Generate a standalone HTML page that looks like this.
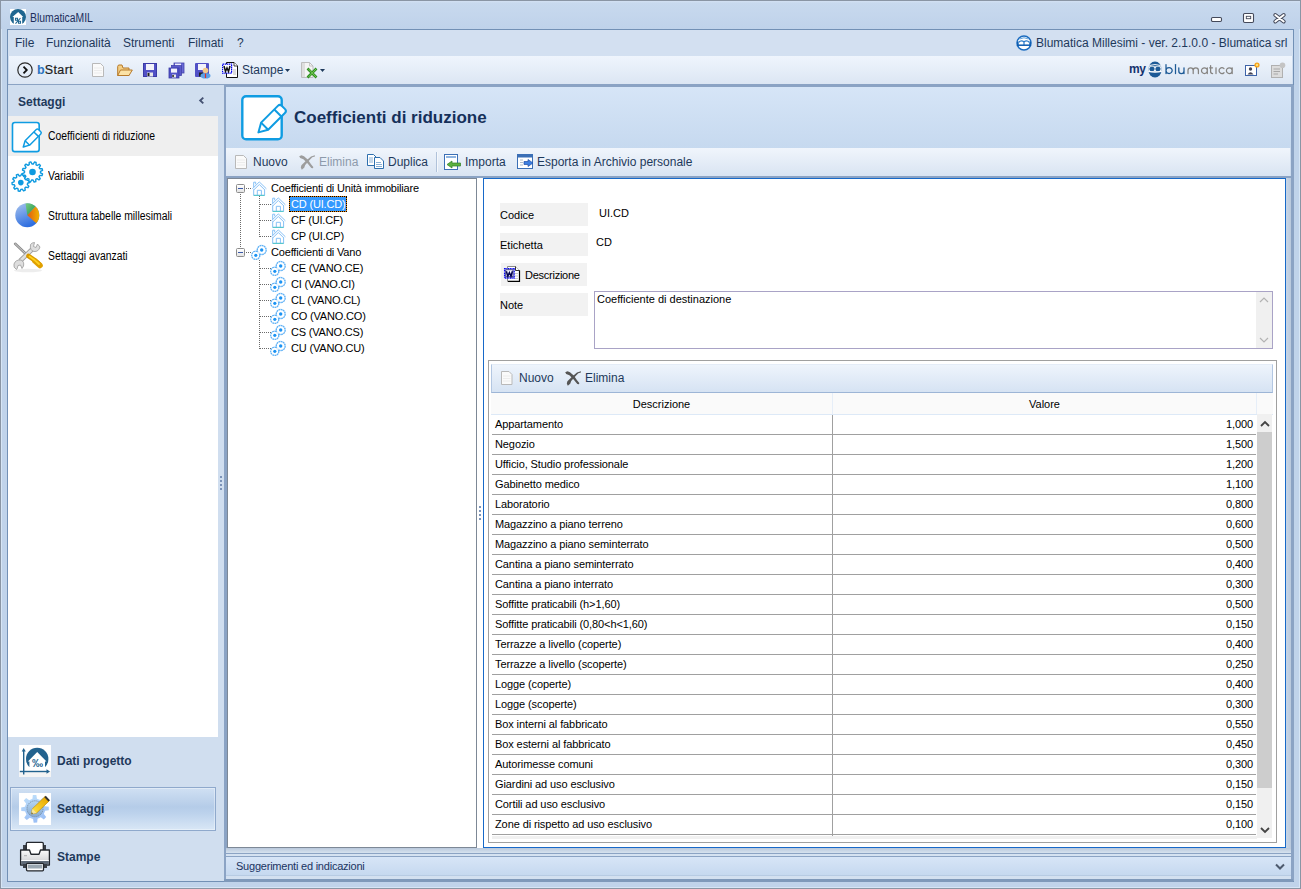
<!DOCTYPE html>
<html><head><meta charset="utf-8">
<style>
*{margin:0;padding:0;box-sizing:border-box}
html,body{width:1301px;height:889px;overflow:hidden}
body{position:relative;background:#c0d3ea;font-family:"Liberation Sans",sans-serif;color:#000;font-size:11px}
.a{position:absolute}
svg{overflow:visible}
.li{font-size:12px;transform:scaleX(0.865);transform-origin:0 0}
.t{position:absolute;white-space:pre;line-height:1}
.rw{font-size:11px;letter-spacing:-0.1px}
.tr{font-size:11px;letter-spacing:-0.18px}
</style></head><body>
<!-- outer window border -->
<div class="a" style="left:0;top:0;width:1301px;height:889px;border:1px solid #8a95a4"></div>
<div class="a" style="left:1px;top:1px;width:1299px;height:887px;border:1px solid #d6e5f5;border-top-color:#dbe7f5"></div>
<!-- title bar -->
<div class="a" style="left:1px;top:1px;width:1299px;height:28px;background:linear-gradient(#d3e1f3 0,#c8d9ee 8%,#bfd2ea)"></div>
<div class="t li" style="left:30px;top:12px;color:#1e2f5c">BlumaticaMIL</div>

<!-- inner frame -->
<div class="a" style="left:7px;top:29px;width:1287px;height:853px;border:1px solid #7290b5;background:#cddcef"></div>
<!-- menu bar -->
<div class="a" style="left:8px;top:30px;width:1285px;height:26px;background:#d3e0f1"></div>
<div class="t" style="left:15px;top:37px;font-size:12px;color:#1e395b">File</div>
<div class="t" style="left:46px;top:37px;font-size:12px;color:#1e395b">Funzionalità</div>
<div class="t" style="left:123px;top:37px;font-size:12px;color:#1e395b">Strumenti</div>
<div class="t" style="left:188px;top:37px;font-size:12px;color:#1e395b">Filmati</div>
<div class="t" style="left:237px;top:37px;font-size:12px;color:#1e395b">?</div>
<div class="t" style="left:1036px;top:37px;font-size:12px;color:#1e395b">Blumatica Millesimi - ver. 2.1.0.0 - Blumatica srl</div>
<!-- toolbar -->
<div class="a" style="left:9px;top:56px;width:1283px;height:28px;background:linear-gradient(#eff5fd,#dce6f3)"></div>
<div class="t" style="left:37px;top:64px;font-size:12.5px;font-weight:bold;color:#2b74c0">b<span style="color:#1c1c1c;font-weight:normal;-webkit-text-stroke:0.2px #1c1c1c;letter-spacing:0.45px">Start</span></div>
<div class="t" style="left:242px;top:64px;font-size:12px;color:#1e395b">Stampe</div>

<!-- line under toolbar -->
<div class="a" style="left:8px;top:84px;width:1285px;height:1px;background:#8ba3c4"></div>

<!-- left panel -->
<div class="a" style="left:8px;top:85px;width:216px;height:796px;background:#d0deef"></div>
<div class="t" style="left:18px;top:96px;font-size:12px;font-weight:bold;color:#1e395b">Settaggi</div>
<div class="a" style="left:8px;top:116px;width:210px;height:621px;background:#fff"></div>
<div class="a" style="left:8px;top:116px;width:210px;height:40px;background:#efefef"></div>
<div class="t li" style="left:48px;top:130px">Coefficienti di riduzione</div>
<div class="t li" style="left:48px;top:170px">Variabili</div>
<div class="t li" style="left:48px;top:210px">Struttura tabelle millesimali</div>
<div class="t li" style="left:48px;top:250px">Settaggi avanzati</div>

<div class="a" style="left:10px;top:787px;width:206px;height:44px;border:1px solid #8fa9cc;box-shadow:inset 0 0 0 1px rgba(255,255,255,0.35);background:linear-gradient(#d0e0f3,#b5cce8 45%,#bcd2ec 60%,#d9e7f6)"></div>
<div class="t" style="left:57px;top:755px;font-size:12px;font-weight:bold;color:#1e395b">Dati progetto</div>
<div class="t" style="left:57px;top:803px;font-size:12px;font-weight:bold;color:#1e395b">Settaggi</div>
<div class="t" style="left:57px;top:851px;font-size:12px;font-weight:bold;color:#1e395b">Stampe</div>

<!-- content panel border -->
<div class="a" style="left:224px;top:84px;width:70px;height:1px;background:#8ba3c4"></div>
<div class="a" style="left:224px;top:85px;width:1068px;height:2px;background:#8ba3c4"></div>
<div class="a" style="left:224px;top:85px;width:2px;height:796px;background:#8ba3c4"></div>
<!-- content header -->
<div class="a" style="left:226px;top:87px;width:1066px;height:61px;background:linear-gradient(#d6e5f7,#c6d9ef)"></div>
<div class="t" style="left:294px;top:109px;font-size:17px;font-weight:bold;color:#15305a">Coefficienti di riduzione</div>
<!-- content toolbar -->
<div class="a" style="left:226px;top:148px;width:1064px;height:28px;background:linear-gradient(#f0f5fc,#d9e4f2)"></div>
<div class="t" style="left:253px;top:156px;font-size:12px;color:#1e395b">Nuovo</div>
<div class="t" style="left:319px;top:156px;font-size:12px;color:#8d9aab">Elimina</div>
<div class="t" style="left:388px;top:156px;font-size:12px;color:#1e395b">Duplica</div>
<div class="a" style="left:436px;top:152px;width:1px;height:20px;background:#b0c2da"></div>
<div class="t" style="left:465px;top:156px;font-size:12px;color:#1e395b">Importa</div>
<div class="t" style="left:537px;top:156px;font-size:12px;color:#1e395b">Esporta in Archivio personale</div>

<!-- tree panel -->
<div class="a" style="left:224px;top:176px;width:1067px;height:2px;background:#8ba3c4"></div>
<div class="a" style="left:224px;top:178px;width:3px;height:670px;background:#8ba3c4"></div>
<div class="a" style="left:227px;top:178px;width:1059px;height:670px;background:#fff"></div>
<div class="a" style="left:227px;top:178px;width:250px;height:670px;background:#fff;border:1px solid #7d8896"></div>
<div class="a" style="left:479px;top:506px;width:2px;height:2px;background:#7c93b8;box-shadow:0 4px #7c93b8,0 8px #7c93b8,0 12px #7c93b8"></div>
<div class="a" style="left:220px;top:476px;width:2px;height:2px;background:#7c93b8;box-shadow:0 4px #7c93b8,0 8px #7c93b8,0 12px #7c93b8"></div>

<!-- detail panel -->
<div class="a" style="left:483px;top:178px;width:803px;height:670px;background:#fff;border:1px solid #1769c9"></div>
<div class="a" style="left:500px;top:203px;width:88px;height:23px;background:#f2f2f2"></div>
<div class="a" style="left:500px;top:233px;width:88px;height:23px;background:#f2f2f2"></div>
<div class="a" style="left:501px;top:263px;width:86px;height:23px;background:#f2f2f2"></div>
<div class="a" style="left:500px;top:293px;width:88px;height:23px;background:#f2f2f2"></div>
<div class="t" style="left:500px;top:210px;font-size:11px">Codice</div>
<div class="t" style="left:500px;top:240px;font-size:11px">Etichetta</div>
<div class="t" style="left:525px;top:270px;font-size:11px;letter-spacing:-0.25px">Descrizione</div>
<div class="t" style="left:500px;top:300px;font-size:11px">Note</div>
<div class="t" style="left:599px;top:208px;font-size:11px">UI.CD</div>
<div class="t" style="left:596px;top:237px;font-size:11px">CD</div>
<div class="a" style="left:594px;top:291px;width:679px;height:58px;border:1px solid #a9a3c6;background:#fff"></div>
<div class="a" style="left:1256px;top:292px;width:16px;height:56px;background:#f0f0f0"></div>
<div class="t" style="left:597px;top:294px;font-size:11px">Coefficiente di destinazione</div>

<!-- grid -->
<div class="a" style="left:488px;top:360px;width:789px;height:483px;border:1px solid #a0a0a0;background:#fff"></div>
<div class="a" style="left:491px;top:364px;width:782px;height:29px;border:1px solid #9db5d6;border-top-color:#e4ecf7;border-left-color:#b3c7e2;border-right-color:#b3c7e2;background:linear-gradient(#eef4fc,#d6e3f3)"></div>
<div class="t" style="left:519px;top:372px;font-size:12px;color:#1e395b">Nuovo</div>
<div class="t" style="left:585px;top:372px;font-size:12px;color:#1e395b">Elimina</div>
<div class="a" style="left:491px;top:393px;width:782px;height:22px;background:#fafafa;border-bottom:1px solid #dde9f7"></div>
<div class="a" style="left:832px;top:393px;width:1px;height:21px;background:#e6eef8"></div>
<div class="a" style="left:1256px;top:393px;width:1px;height:21px;background:#e6eef8"></div>
<div class="t" style="left:491px;top:399px;width:341px;text-align:center;font-size:11px">Descrizione</div>
<div class="t" style="left:833px;top:399px;width:423px;text-align:center;font-size:11px">Valore</div>
<div class="a" id="rows" style="left:491px;top:415px;width:766px;height:423px;overflow:hidden">
<div class="a" style="left:341px;top:0;width:1px;height:423px;background:#a0a0a0"></div>
<div class="t rw" style="top:4px;left:4px">Appartamento</div><div class="t rw" style="top:4px;right:4px">1,000</div><div class="a" style="left:1px;top:19px;width:764px;height:1px;background:#a0a0a0"></div>
<div class="t rw" style="top:24px;left:4px">Negozio</div><div class="t rw" style="top:24px;right:4px">1,500</div><div class="a" style="left:1px;top:39px;width:764px;height:1px;background:#a0a0a0"></div>
<div class="t rw" style="top:44px;left:4px">Ufficio, Studio professionale</div><div class="t rw" style="top:44px;right:4px">1,200</div><div class="a" style="left:1px;top:59px;width:764px;height:1px;background:#a0a0a0"></div>
<div class="t rw" style="top:64px;left:4px">Gabinetto medico</div><div class="t rw" style="top:64px;right:4px">1,100</div><div class="a" style="left:1px;top:79px;width:764px;height:1px;background:#a0a0a0"></div>
<div class="t rw" style="top:84px;left:4px">Laboratorio</div><div class="t rw" style="top:84px;right:4px">0,800</div><div class="a" style="left:1px;top:99px;width:764px;height:1px;background:#a0a0a0"></div>
<div class="t rw" style="top:104px;left:4px">Magazzino a piano terreno</div><div class="t rw" style="top:104px;right:4px">0,600</div><div class="a" style="left:1px;top:119px;width:764px;height:1px;background:#a0a0a0"></div>
<div class="t rw" style="top:124px;left:4px">Magazzino a piano seminterrato</div><div class="t rw" style="top:124px;right:4px">0,500</div><div class="a" style="left:1px;top:139px;width:764px;height:1px;background:#a0a0a0"></div>
<div class="t rw" style="top:144px;left:4px">Cantina a piano seminterrato</div><div class="t rw" style="top:144px;right:4px">0,400</div><div class="a" style="left:1px;top:159px;width:764px;height:1px;background:#a0a0a0"></div>
<div class="t rw" style="top:164px;left:4px">Cantina a piano interrato</div><div class="t rw" style="top:164px;right:4px">0,300</div><div class="a" style="left:1px;top:179px;width:764px;height:1px;background:#a0a0a0"></div>
<div class="t rw" style="top:184px;left:4px">Soffitte praticabili (h&gt;1,60)</div><div class="t rw" style="top:184px;right:4px">0,500</div><div class="a" style="left:1px;top:199px;width:764px;height:1px;background:#a0a0a0"></div>
<div class="t rw" style="top:204px;left:4px">Soffitte praticabili (0,80&lt;h&lt;1,60)</div><div class="t rw" style="top:204px;right:4px">0,150</div><div class="a" style="left:1px;top:219px;width:764px;height:1px;background:#a0a0a0"></div>
<div class="t rw" style="top:224px;left:4px">Terrazze a livello (coperte)</div><div class="t rw" style="top:224px;right:4px">0,400</div><div class="a" style="left:1px;top:239px;width:764px;height:1px;background:#a0a0a0"></div>
<div class="t rw" style="top:244px;left:4px">Terrazze a livello (scoperte)</div><div class="t rw" style="top:244px;right:4px">0,250</div><div class="a" style="left:1px;top:259px;width:764px;height:1px;background:#a0a0a0"></div>
<div class="t rw" style="top:264px;left:4px">Logge (coperte)</div><div class="t rw" style="top:264px;right:4px">0,400</div><div class="a" style="left:1px;top:279px;width:764px;height:1px;background:#a0a0a0"></div>
<div class="t rw" style="top:284px;left:4px">Logge (scoperte)</div><div class="t rw" style="top:284px;right:4px">0,300</div><div class="a" style="left:1px;top:299px;width:764px;height:1px;background:#a0a0a0"></div>
<div class="t rw" style="top:304px;left:4px">Box interni al fabbricato</div><div class="t rw" style="top:304px;right:4px">0,550</div><div class="a" style="left:1px;top:319px;width:764px;height:1px;background:#a0a0a0"></div>
<div class="t rw" style="top:324px;left:4px">Box esterni al fabbricato</div><div class="t rw" style="top:324px;right:4px">0,450</div><div class="a" style="left:1px;top:339px;width:764px;height:1px;background:#a0a0a0"></div>
<div class="t rw" style="top:344px;left:4px">Autorimesse comuni</div><div class="t rw" style="top:344px;right:4px">0,300</div><div class="a" style="left:1px;top:359px;width:764px;height:1px;background:#a0a0a0"></div>
<div class="t rw" style="top:364px;left:4px">Giardini ad uso esclusivo</div><div class="t rw" style="top:364px;right:4px">0,150</div><div class="a" style="left:1px;top:379px;width:764px;height:1px;background:#a0a0a0"></div>
<div class="t rw" style="top:384px;left:4px">Cortili ad uso esclusivo</div><div class="t rw" style="top:384px;right:4px">0,150</div><div class="a" style="left:1px;top:399px;width:764px;height:1px;background:#a0a0a0"></div>
<div class="t rw" style="top:404px;left:4px">Zone di rispetto ad uso esclusivo</div><div class="t rw" style="top:404px;right:4px">0,100</div><div class="a" style="left:1px;top:419px;width:764px;height:1px;background:#a0a0a0"></div>
</div>
<div class="a" style="left:492px;top:836px;width:765px;height:3px;background:#f0f0f0"></div>
<div class="a" style="left:1257px;top:414px;width:15px;height:424px;background:#f0f0f0"></div>
<div class="a" style="left:1257px;top:432px;width:15px;height:356px;background:#cdcdcd"></div>

<!-- right strip & bottom -->
<div class="a" style="left:1286px;top:178px;width:5px;height:670px;background:linear-gradient(90deg,#c9d6e6,#b9c9dd)"></div>
<div class="a" style="left:1291px;top:85px;width:3px;height:796px;background:#8ba3c4"></div>
<div class="a" style="left:226px;top:848px;width:1065px;height:5px;background:linear-gradient(#b9c8db,#d6e2ef)"></div>
<div class="a" style="left:226px;top:853px;width:1065px;height:1px;background:#8ba3c4"></div>
<div class="a" style="left:226px;top:854px;width:1065px;height:2px;background:#d5e2f1"></div>
<div class="a" style="left:226px;top:856px;width:1065px;height:1px;background:#8ba3c4"></div>
<div class="a" style="left:226px;top:857px;width:1065px;height:19px;background:linear-gradient(#d7e5f7,#c5d8ef)"></div>
<div class="a" style="left:226px;top:875px;width:1065px;height:1px;background:#b7cbe3"></div>
<div class="a" style="left:226px;top:876px;width:1065px;height:3px;background:#d3e0f0"></div>
<div class="a" style="left:224px;top:879px;width:1069px;height:3px;background:#7f99ba"></div>
<svg class="a" style="left:1275px;top:863px" width="10" height="7" viewBox="0 0 10 7"><path d="M1 1.5 L5 5.5 L9 1.5" fill="none" stroke="#4d5a6e" stroke-width="2"/></svg>
<div class="t" style="left:236px;top:861px;font-size:11px;letter-spacing:-0.22px;color:#1b3461">Suggerimenti ed indicazioni</div>

<!-- tree -->
<div class="a" style="left:240px;top:194px;width:1px;height:57px;background:repeating-linear-gradient(#6a6a6a 0 1px,transparent 1px 2px)"></div>
<div class="a" style="left:246px;top:188px;width:6px;height:1px;background:repeating-linear-gradient(90deg,#6a6a6a 0 1px,transparent 1px 2px)"></div>
<div class="a" style="left:246px;top:252px;width:6px;height:1px;background:repeating-linear-gradient(90deg,#6a6a6a 0 1px,transparent 1px 2px)"></div>
<div class="a" style="left:259px;top:196px;width:1px;height:41px;background:repeating-linear-gradient(#6a6a6a 0 1px,transparent 1px 2px)"></div>
<div class="a" style="left:260px;top:204px;width:11px;height:1px;background:repeating-linear-gradient(90deg,#6a6a6a 0 1px,transparent 1px 2px)"></div>
<div class="a" style="left:260px;top:220px;width:11px;height:1px;background:repeating-linear-gradient(90deg,#6a6a6a 0 1px,transparent 1px 2px)"></div>
<div class="a" style="left:260px;top:236px;width:11px;height:1px;background:repeating-linear-gradient(90deg,#6a6a6a 0 1px,transparent 1px 2px)"></div>
<div class="a" style="left:259px;top:260px;width:1px;height:89px;background:repeating-linear-gradient(#6a6a6a 0 1px,transparent 1px 2px)"></div>
<div class="a" style="left:260px;top:268px;width:11px;height:1px;background:repeating-linear-gradient(90deg,#6a6a6a 0 1px,transparent 1px 2px)"></div>
<div class="a" style="left:260px;top:284px;width:11px;height:1px;background:repeating-linear-gradient(90deg,#6a6a6a 0 1px,transparent 1px 2px)"></div>
<div class="a" style="left:260px;top:300px;width:11px;height:1px;background:repeating-linear-gradient(90deg,#6a6a6a 0 1px,transparent 1px 2px)"></div>
<div class="a" style="left:260px;top:316px;width:11px;height:1px;background:repeating-linear-gradient(90deg,#6a6a6a 0 1px,transparent 1px 2px)"></div>
<div class="a" style="left:260px;top:332px;width:11px;height:1px;background:repeating-linear-gradient(90deg,#6a6a6a 0 1px,transparent 1px 2px)"></div>
<div class="a" style="left:260px;top:348px;width:11px;height:1px;background:repeating-linear-gradient(90deg,#6a6a6a 0 1px,transparent 1px 2px)"></div>
<div class="a" style="left:236px;top:184px;width:9px;height:9px;border:1px solid #8c8c8c;border-radius:1.5px;background:linear-gradient(#fff,#e4e4e4)"><div class="a" style="left:1px;top:3px;width:5px;height:1px;background:#3a58a8"></div></div>
<div class="a" style="left:236px;top:248px;width:9px;height:9px;border:1px solid #8c8c8c;border-radius:1.5px;background:linear-gradient(#fff,#e4e4e4)"><div class="a" style="left:1px;top:3px;width:5px;height:1px;background:#3a58a8"></div></div>
<svg class="a" style="left:252px;top:181px" width="16" height="16" viewBox="0 0 16 16"><path d="M0.4 7.8 L7.3 0.9 L14.4 7.8 M1.9 8.8 L7.3 3.5 L12.7 8.8 M1.7 8.2 V14.3 H12.6 V8.2 M5.3 14.3 V9.3 H9.4 V14.3 M1.7 6.3 V1.2 H3.7 V3.3" fill="none" stroke="#86c0f6" stroke-width="1"/><path d="M1.7 14.4 H12.6" stroke="#4fc6c6" stroke-width="1"/></svg>
<svg class="a" style="left:271px;top:197px" width="16" height="16" viewBox="0 0 16 16"><path d="M0.4 7.8 L7.3 0.9 L14.4 7.8 M1.9 8.8 L7.3 3.5 L12.7 8.8 M1.7 8.2 V14.3 H12.6 V8.2 M5.3 14.3 V9.3 H9.4 V14.3 M1.7 6.3 V1.2 H3.7 V3.3" fill="none" stroke="#86c0f6" stroke-width="1"/><path d="M1.7 14.4 H12.6" stroke="#4fc6c6" stroke-width="1"/></svg>
<svg class="a" style="left:271px;top:213px" width="16" height="16" viewBox="0 0 16 16"><path d="M0.4 7.8 L7.3 0.9 L14.4 7.8 M1.9 8.8 L7.3 3.5 L12.7 8.8 M1.7 8.2 V14.3 H12.6 V8.2 M5.3 14.3 V9.3 H9.4 V14.3 M1.7 6.3 V1.2 H3.7 V3.3" fill="none" stroke="#86c0f6" stroke-width="1"/><path d="M1.7 14.4 H12.6" stroke="#4fc6c6" stroke-width="1"/></svg>
<svg class="a" style="left:271px;top:229px" width="16" height="16" viewBox="0 0 16 16"><path d="M0.4 7.8 L7.3 0.9 L14.4 7.8 M1.9 8.8 L7.3 3.5 L12.7 8.8 M1.7 8.2 V14.3 H12.6 V8.2 M5.3 14.3 V9.3 H9.4 V14.3 M1.7 6.3 V1.2 H3.7 V3.3" fill="none" stroke="#86c0f6" stroke-width="1"/><path d="M1.7 14.4 H12.6" stroke="#4fc6c6" stroke-width="1"/></svg>
<svg class="a" style="left:251px;top:244px" width="16" height="16" viewBox="0 0 16 16"><circle cx="4.8" cy="11.3" r="4" fill="#fff" stroke="#63b3f6" stroke-width="1.5" stroke-dasharray="1.8 0.45"/><circle cx="10.7" cy="6" r="4.4" fill="#fff" stroke="#63b3f6" stroke-width="1.5" stroke-dasharray="1.8 0.45"/><circle cx="4.8" cy="11.3" r="3.2" fill="#fff"/><circle cx="10.7" cy="6" r="3.6" fill="#fff"/><circle cx="7.6" cy="8.7" r="1.2" fill="#e3f1fd"/><circle cx="10.7" cy="6" r="1.7" fill="#1b93f3"/><circle cx="4.8" cy="11.3" r="1.6" fill="#1b93f3"/></svg>
<svg class="a" style="left:270px;top:260px" width="16" height="16" viewBox="0 0 16 16"><circle cx="4.8" cy="11.3" r="4" fill="#fff" stroke="#63b3f6" stroke-width="1.5" stroke-dasharray="1.8 0.45"/><circle cx="10.7" cy="6" r="4.4" fill="#fff" stroke="#63b3f6" stroke-width="1.5" stroke-dasharray="1.8 0.45"/><circle cx="4.8" cy="11.3" r="3.2" fill="#fff"/><circle cx="10.7" cy="6" r="3.6" fill="#fff"/><circle cx="7.6" cy="8.7" r="1.2" fill="#e3f1fd"/><circle cx="10.7" cy="6" r="1.7" fill="#1b93f3"/><circle cx="4.8" cy="11.3" r="1.6" fill="#1b93f3"/></svg>
<svg class="a" style="left:270px;top:276px" width="16" height="16" viewBox="0 0 16 16"><circle cx="4.8" cy="11.3" r="4" fill="#fff" stroke="#63b3f6" stroke-width="1.5" stroke-dasharray="1.8 0.45"/><circle cx="10.7" cy="6" r="4.4" fill="#fff" stroke="#63b3f6" stroke-width="1.5" stroke-dasharray="1.8 0.45"/><circle cx="4.8" cy="11.3" r="3.2" fill="#fff"/><circle cx="10.7" cy="6" r="3.6" fill="#fff"/><circle cx="7.6" cy="8.7" r="1.2" fill="#e3f1fd"/><circle cx="10.7" cy="6" r="1.7" fill="#1b93f3"/><circle cx="4.8" cy="11.3" r="1.6" fill="#1b93f3"/></svg>
<svg class="a" style="left:270px;top:292px" width="16" height="16" viewBox="0 0 16 16"><circle cx="4.8" cy="11.3" r="4" fill="#fff" stroke="#63b3f6" stroke-width="1.5" stroke-dasharray="1.8 0.45"/><circle cx="10.7" cy="6" r="4.4" fill="#fff" stroke="#63b3f6" stroke-width="1.5" stroke-dasharray="1.8 0.45"/><circle cx="4.8" cy="11.3" r="3.2" fill="#fff"/><circle cx="10.7" cy="6" r="3.6" fill="#fff"/><circle cx="7.6" cy="8.7" r="1.2" fill="#e3f1fd"/><circle cx="10.7" cy="6" r="1.7" fill="#1b93f3"/><circle cx="4.8" cy="11.3" r="1.6" fill="#1b93f3"/></svg>
<svg class="a" style="left:270px;top:308px" width="16" height="16" viewBox="0 0 16 16"><circle cx="4.8" cy="11.3" r="4" fill="#fff" stroke="#63b3f6" stroke-width="1.5" stroke-dasharray="1.8 0.45"/><circle cx="10.7" cy="6" r="4.4" fill="#fff" stroke="#63b3f6" stroke-width="1.5" stroke-dasharray="1.8 0.45"/><circle cx="4.8" cy="11.3" r="3.2" fill="#fff"/><circle cx="10.7" cy="6" r="3.6" fill="#fff"/><circle cx="7.6" cy="8.7" r="1.2" fill="#e3f1fd"/><circle cx="10.7" cy="6" r="1.7" fill="#1b93f3"/><circle cx="4.8" cy="11.3" r="1.6" fill="#1b93f3"/></svg>
<svg class="a" style="left:270px;top:324px" width="16" height="16" viewBox="0 0 16 16"><circle cx="4.8" cy="11.3" r="4" fill="#fff" stroke="#63b3f6" stroke-width="1.5" stroke-dasharray="1.8 0.45"/><circle cx="10.7" cy="6" r="4.4" fill="#fff" stroke="#63b3f6" stroke-width="1.5" stroke-dasharray="1.8 0.45"/><circle cx="4.8" cy="11.3" r="3.2" fill="#fff"/><circle cx="10.7" cy="6" r="3.6" fill="#fff"/><circle cx="7.6" cy="8.7" r="1.2" fill="#e3f1fd"/><circle cx="10.7" cy="6" r="1.7" fill="#1b93f3"/><circle cx="4.8" cy="11.3" r="1.6" fill="#1b93f3"/></svg>
<svg class="a" style="left:270px;top:340px" width="16" height="16" viewBox="0 0 16 16"><circle cx="4.8" cy="11.3" r="4" fill="#fff" stroke="#63b3f6" stroke-width="1.5" stroke-dasharray="1.8 0.45"/><circle cx="10.7" cy="6" r="4.4" fill="#fff" stroke="#63b3f6" stroke-width="1.5" stroke-dasharray="1.8 0.45"/><circle cx="4.8" cy="11.3" r="3.2" fill="#fff"/><circle cx="10.7" cy="6" r="3.6" fill="#fff"/><circle cx="7.6" cy="8.7" r="1.2" fill="#e3f1fd"/><circle cx="10.7" cy="6" r="1.7" fill="#1b93f3"/><circle cx="4.8" cy="11.3" r="1.6" fill="#1b93f3"/></svg>
<div class="a" style="left:289px;top:196px;width:58px;height:16px;background:#3399ff;box-shadow:inset 0 0 0 1px #e8860c;outline:1px dotted #000;outline-offset:-1px"></div>
<div class="t tr" style="left:271px;top:183px;color:#000">Coefficienti di Unità immobiliare</div>
<div class="t tr" style="left:291px;top:199px;color:#fff">CD (UI.CD)</div>
<div class="t tr" style="left:291px;top:215px;color:#000">CF (UI.CF)</div>
<div class="t tr" style="left:291px;top:231px;color:#000">CP (UI.CP)</div>
<div class="t tr" style="left:271px;top:247px;color:#000">Coefficienti di Vano</div>
<div class="t tr" style="left:291px;top:263px;color:#000">CE (VANO.CE)</div>
<div class="t tr" style="left:291px;top:279px;color:#000">CI (VANO.CI)</div>
<div class="t tr" style="left:291px;top:295px;color:#000">CL (VANO.CL)</div>
<div class="t tr" style="left:291px;top:311px;color:#000">CO (VANO.CO)</div>
<div class="t tr" style="left:291px;top:327px;color:#000">CS (VANO.CS)</div>
<div class="t tr" style="left:291px;top:343px;color:#000">CU (VANO.CU)</div><!-- ICONS -->
<!-- title icon -->
<svg class="a" style="left:10px;top:9px" width="16" height="16" viewBox="0 0 16 16"><rect width="16" height="16" fill="#fff"/><circle cx="8" cy="8" r="8" fill="#1f6690"/><path d="M8.2 2.9 L13.2 7.9 L12.2 7.9 L12.2 16 L3.8 16 L3.8 7.9 L2.4 7.9 Z" fill="#fff"/><rect x="3.5" y="15" width="9" height="1" fill="#fff"/><path d="M5.5 9.2h2v2h-2zM8.5 12.2h2v2h-2zM10.5 9 L5.5 14.6" fill="none" stroke="#1f6690" stroke-width="1.1"/></svg>
<!-- window controls -->
<svg class="a" style="left:1210px;top:12px" width="80" height="12" viewBox="0 0 80 12"><rect x="1.5" y="5.5" width="10" height="4" rx="1.2" fill="#fff" stroke="#44495a" stroke-width="1.1"/><rect x="33.5" y="1.5" width="10" height="9" rx="1.2" fill="#fff" stroke="#44495a" stroke-width="1.1"/><rect x="36.3" y="4.3" width="4.4" height="2.4" fill="#fff" stroke="#44495a" stroke-width="0.9"/><path d="M65.3 3 L73.7 9.5 M73.7 3 L65.3 9.5" stroke="#44495a" stroke-width="4" stroke-linecap="round"/><path d="M65.3 3 L73.7 9.5 M73.7 3 L65.3 9.5" stroke="#fff" stroke-width="2" stroke-linecap="round"/></svg>
<!-- version icon -->
<svg class="a" style="left:1016px;top:35px" width="16" height="16" viewBox="0 0 16 16"><circle cx="8" cy="8" r="7" fill="#fff" stroke="#1b6cc0" stroke-width="1.5"/><path d="M1.5 6.5 Q2.5 9 1.5 11 M14.5 6.5 Q13.5 9 14.5 11" stroke="#0d5cb0" stroke-width="1.6" fill="none"/><path d="M2.5 7.5 Q5 4.6 8 6.8 Q11 4.6 13.5 7.5" fill="none" stroke="#2b7bc8" stroke-width="1.2"/><path d="M8 6.8 V10.2" stroke="#2b7bc8" stroke-width="1.2"/><path d="M1.5 10.2 H14.5" stroke="#0d5cb0" stroke-width="1.5"/><path d="M3.5 4 Q8 1.5 12.5 4" fill="none" stroke="#3a8ad0" stroke-width="0.8"/></svg>
<!-- bStart circle -->
<svg class="a" style="left:17px;top:62px" width="16" height="16" viewBox="0 0 16 16"><circle cx="8" cy="8" r="7.2" fill="none" stroke="#2b2b2b" stroke-width="1.2"/><path d="M6.5 4.6 L9.8 8 L6.5 11.4" fill="none" stroke="#111" stroke-width="1.8"/></svg>
<!-- new doc -->
<svg class="a" style="left:92px;top:63px" width="13" height="14" viewBox="0 0 13 14"><path d="M0.5 0.5 H8.5 L11.5 3.5 V13.5 H0.5 Z" fill="#fafafa" stroke="#b9b9b9"/><path d="M2 5H10M2 7.5H10M2 10H10" stroke="#ececec"/></svg>
<!-- open folder -->
<svg class="a" style="left:117px;top:64px" width="16" height="13" viewBox="0 0 16 13"><path d="M0.7 2.5 L0.7 11.5 L12 11.5 L12 4 L6 4 L5 1 L1.5 1 Z" fill="#f3cf86" stroke="#b77a2a"/><path d="M0.7 11.5 L3.5 6 L15.3 6 L12 11.5 Z" fill="#fbe2a5" stroke="#b77a2a"/></svg>
<!-- save -->
<svg class="a" style="left:143px;top:63px" width="14" height="14" viewBox="0 0 14 14"><rect x="0" y="0" width="14" height="14" rx="1" fill="#5151c6"/><rect x="0.5" y="0.5" width="13" height="13" fill="none" stroke="#3a3aa6"/><rect x="3" y="1" width="8" height="6" fill="#f2f2fa"/><rect x="4" y="9.5" width="6" height="4" fill="#e8e8e8"/><rect x="4.5" y="10" width="2" height="3" fill="#222"/></svg>
<!-- save all -->
<svg class="a" style="left:169px;top:63px" width="15" height="15" viewBox="0 0 15 15"><rect x="5" y="0" width="10" height="10" fill="#6a6ad6" stroke="#4444aa" stroke-width="0.8"/><rect x="2.5" y="2.5" width="10" height="10" fill="#5a5acb" stroke="#4444aa" stroke-width="0.8"/><rect x="0" y="5" width="10" height="10" fill="#5151c6" stroke="#3a3aa6" stroke-width="0.8"/><rect x="2" y="5.6" width="6" height="4" fill="#f2f2fa"/><rect x="3" y="11.5" width="4" height="3" fill="#e8e8e8"/><rect x="3.3" y="12" width="1.5" height="2" fill="#222"/><rect x="6" y="0.6" width="6" height="1.5" fill="#eef"/></svg>
<!-- save as -->
<svg class="a" style="left:195px;top:63px" width="16" height="15" viewBox="0 0 16 15"><rect x="0" y="0" width="14" height="14" rx="1" fill="#5151c6"/><rect x="3" y="1" width="8" height="6" fill="#f2f2fa"/><rect x="4" y="9.5" width="4" height="4" fill="#222"/><ellipse cx="10.5" cy="12.8" rx="5" ry="2.8" fill="#5aa0e6"/><circle cx="10.5" cy="7.5" r="2.8" fill="#f3c98a"/><path d="M10.5 10.5 L10.5 15" stroke="#d63030" stroke-width="1.2"/></svg>
<!-- word icon toolbar -->
<svg class="a" style="left:222px;top:62px" width="17" height="16" viewBox="0 0 17 16"><path d="M4.5 0.5 H12 L15.5 4 V15.5 H4.5 Z" fill="#fff" stroke="#111"/><path d="M12 0.5 V4 H15.5" fill="#fff" stroke="#111" stroke-width="0.8"/><rect x="0.6" y="2.1" width="9" height="9" fill="#fff" stroke="#0000f0" stroke-width="1.2" stroke-dasharray="1.4 0.6"/><path d="M2 4 L3.5 9.5 L5 6 L6.5 9.5 L8 4" fill="none" stroke="#111" stroke-width="1.5"/><path d="M11 8H14M11 10H14M11 12H14" stroke="#aaa" stroke-width="0.8"/></svg>
<!-- dropdown arrows -->
<svg class="a" style="left:285px;top:69px" width="5" height="3" viewBox="0 0 5 3"><path d="M0 0H5L2.5 3Z" fill="#1e395b"/></svg>
<svg class="a" style="left:301px;top:62px" width="17" height="17" viewBox="0 0 17 17"><path d="M0.5 0.5 H8.5 L12 4 V15.5 H0.5 Z" fill="#f4f4f4" stroke="#bdbdbd"/><path d="M1 1 H4 V15 H1Z" fill="#dedede"/><path d="M8.5 0.5 V4 H12" fill="none" stroke="#bdbdbd" stroke-width="0.8"/><path d="M6.5 6.5 L15.5 15.5 M15.5 6.5 L6.5 15.5" stroke="#2f8f22" stroke-width="2.6"/><path d="M7.5 7 L15 15 M15 7 L7.5 15" stroke="#7fd15a" stroke-width="0.9"/></svg>
<svg class="a" style="left:320px;top:69px" width="5" height="3" viewBox="0 0 5 3"><path d="M0 0H5L2.5 3Z" fill="#1e395b"/></svg>
<!-- my blumatica -->
<div class="t" style="left:1129px;top:63px;font-size:12px;font-weight:bold;color:#15336e;letter-spacing:-0.3px">my</div>
<svg class="a" style="left:1148px;top:61px" width="14" height="17" viewBox="0 0 14 17"><defs><clipPath id="fc"><ellipse cx="7" cy="8.5" rx="6.6" ry="8"/></clipPath></defs><ellipse cx="7" cy="8.5" rx="6.6" ry="8" fill="#1d5a96"/><g clip-path="url(#fc)"><path d="M0.6 4.6 Q7 2.6 13.4 4.6" stroke="#fff" stroke-width="1" fill="none"/><rect x="0" y="5.3" width="14" height="5.4" fill="#fff"/></g><ellipse cx="4" cy="8" rx="2.6" ry="2.3" fill="#1d5a96"/><ellipse cx="10" cy="8" rx="2.6" ry="2.3" fill="#1d5a96"/><path d="M0.3 10.4 Q7 12 13.7 10.4" stroke="#fff" stroke-width="1.2" fill="none"/></svg>
<svg class="a" style="left:1165px;top:61px" width="70" height="16" viewBox="0 0 70 16"><g fill="none" stroke-width="1.25" stroke-linecap="round"><path d="M1 3.5 V12.5 M1 9.6 a3.1 2.9 0 1 0 6.2 0 a3.1 2.9 0 1 0 -6.2 0" stroke="#1d5a96"/><path d="M10.5 3.5 V12.5" stroke="#1d5a96"/><path d="M13.8 6.8 V9.9 a2.6 2.6 0 0 0 5.2 0 V6.8 M19 12.5 V6.8" stroke="#1d5a96"/><path d="M23 12.5 V9.4 a2.6 2.6 0 0 1 5.2 0 V12.5 M28.2 9.4 a2.6 2.6 0 0 1 5.2 0 V12.5" stroke="#858380"/><path d="M42.3 6.8 V12.5 M42.3 9.65 a2.9 2.85 0 1 0 -5.8 0 a2.9 2.85 0 1 0 5.8 0" stroke="#858380"/><path d="M45.6 4.6 V10.5 a2 2 0 0 0 2 2 M44.6 6.8 H47.5" stroke="#858380"/><path d="M51 6.8 V12.5" stroke="#858380"/><path d="M59 7.6 a2.9 2.85 0 1 0 0 4.1" stroke="#858380"/><path d="M67.2 6.8 V12.5 M67.2 9.65 a2.9 2.85 0 1 0 -5.8 0 a2.9 2.85 0 1 0 5.8 0" stroke="#858380"/></g></svg>
<svg class="a" style="left:1245px;top:62px" width="15" height="15" viewBox="0 0 15 15"><rect x="0.5" y="3.5" width="11" height="10" fill="#fff" stroke="#3d63a8"/><circle cx="5.5" cy="7" r="1.7" fill="#445"/><path d="M2.5 12.5 Q5.5 8 8.5 12.5Z" fill="#445"/><circle cx="12" cy="3" r="2.6" fill="#f7a21b"/><circle cx="12" cy="3" r="1.2" fill="#fde17a"/></svg>
<svg class="a" style="left:1271px;top:62px" width="15" height="16" viewBox="0 0 15 16"><rect x="0.5" y="3.5" width="11" height="12" fill="#dcdcdc" stroke="#b0b0b0"/><path d="M2.5 7H9M2.5 9.5H9M2.5 12H7" stroke="#a8a8a8"/><circle cx="11.5" cy="3.2" r="2.8" fill="#c4c4c4"/></svg>

<!-- left header chevron -->
<svg class="a" style="left:199px;top:97px" width="6" height="8" viewBox="0 0 6 8"><path d="M4.3 0.6 L1.2 3.5 L4.3 6.4" fill="none" stroke="#465373" stroke-width="1.9"/></svg>
<!-- left pencil icon -->
<svg class="a" style="left:11.2px;top:120.8px" width="31" height="31" viewBox="0 0 46 46"><rect x="2.2" y="2.2" width="39.6" height="43.2" rx="3.5" fill="#fff" stroke="#0f9ce2" stroke-width="2.4"/><g transform="translate(18.2 38.6) rotate(-45)"><path d="M0 0 L8.6 -4.7 L32 -4.7 Q34.3 -4.7 34.3 -2.4 L34.3 2.4 Q34.3 4.7 32 4.7 L8.6 4.7 Z" fill="#fff" stroke="#0f9ce2" stroke-width="2.2" stroke-linejoin="round"/><path d="M8.6 -4.7 V4.7 M27 -4.7 V4.7" stroke="#0f9ce2" stroke-width="2.2"/></g></svg>
<!-- gears -->
<svg class="a" style="left:10px;top:160px" width="34" height="34" viewBox="0 0 34 34"><path d="M17.30 24.61 L18.86 26.13 L17.99 27.67 L15.88 27.12 L14.87 28.04 L15.24 30.20 L13.64 30.93 L12.25 29.24 L10.90 29.40 L9.93 31.36 L8.20 31.01 L8.07 28.83 L6.88 28.16 L4.95 29.17 L3.75 27.87 L4.93 26.03 L4.36 24.79 L2.20 24.48 L2.00 22.72 L4.03 21.93 L4.30 20.59 L2.74 19.07 L3.61 17.53 L5.72 18.08 L6.73 17.16 L6.36 15.00 L7.96 14.27 L9.35 15.96 L10.70 15.80 L11.67 13.84 L13.40 14.19 L13.53 16.37 L14.72 17.04 L16.65 16.03 L17.85 17.33 L16.67 19.17 L17.24 20.41 L19.40 20.72 L19.60 22.48 L17.57 23.27Z" fill="#fff" stroke="#0e9ae0" stroke-width="1.4" stroke-linejoin="round"/><path d="M30.46 12.80 L32.51 13.97 L32.04 15.61 L29.68 15.52 L28.99 16.67 L30.18 18.71 L28.96 19.90 L26.96 18.64 L25.79 19.29 L25.80 21.65 L24.14 22.07 L23.04 19.98 L21.70 19.96 L20.53 22.01 L18.89 21.54 L18.98 19.18 L17.83 18.49 L15.79 19.68 L14.60 18.46 L15.86 16.46 L15.21 15.29 L12.85 15.30 L12.43 13.64 L14.52 12.54 L14.54 11.20 L12.49 10.03 L12.96 8.39 L15.32 8.48 L16.01 7.33 L14.82 5.29 L16.04 4.10 L18.04 5.36 L19.21 4.71 L19.20 2.35 L20.86 1.93 L21.96 4.02 L23.30 4.04 L24.47 1.99 L26.11 2.46 L26.02 4.82 L27.17 5.51 L29.21 4.32 L30.40 5.54 L29.14 7.54 L29.79 8.71 L32.15 8.70 L32.57 10.36 L30.48 11.46Z" fill="#fff" stroke="#0e9ae0" stroke-width="1.4" stroke-linejoin="round"/><circle cx="22.5" cy="12" r="3.3" fill="#0e9ae0"/><circle cx="10.8" cy="22.6" r="2.8" fill="#0e9ae0"/></svg>
<!-- pie -->
<svg class="a" style="left:15px;top:203px" width="25" height="25" viewBox="0 0 25 25"><defs><linearGradient id="pb" x1="0" y1="0" x2="0.4" y2="1"><stop offset="0" stop-color="#a9c4ee"/><stop offset="1" stop-color="#2f6fe0"/></linearGradient><linearGradient id="po" x1="0" y1="0" x2="1" y2="0"><stop offset="0" stop-color="#e05a10"/><stop offset="1" stop-color="#f0b400"/></linearGradient><linearGradient id="pg" x1="0" y1="0" x2="1" y2="1"><stop offset="0" stop-color="#79c98a"/><stop offset="1" stop-color="#1f9a3e"/></linearGradient></defs><circle cx="12.3" cy="12.3" r="12" fill="url(#pb)"/><path d="M12.3 12.3 L10.5 0.4 A12 12 0 0 1 20.5 3.6 Z" fill="url(#pg)"/><path d="M12.3 12.3 L20.5 3.6 A12 12 0 0 1 21.3 20.2 Z" fill="url(#po)"/></svg>
<!-- tools -->
<svg class="a" style="left:12px;top:241px" width="32" height="32" viewBox="0 0 32 32"><ellipse cx="16" cy="29.5" rx="14" ry="1.8" fill="#000" opacity="0.07"/><path d="M3.2 2.8 L14.5 13.5" stroke="#8c8c8c" stroke-width="2.6" stroke-linecap="round"/><path d="M3.2 2.8 L14.5 13.5" stroke="#cfcfcf" stroke-width="1" stroke-linecap="round"/><path d="M8 20 L20.5 8" stroke="#9e9e9e" stroke-width="4.6"/><path d="M8 20 L20.5 8" stroke="#e0e0e0" stroke-width="2.8"/><path d="M18.5 3.5 Q17.5 9.5 22 10.5 Q26.5 11 28 6 L25.5 3 L24 6.5 L21.5 5.5 L22.5 1.5 Q20 1.5 18.5 3.5Z" fill="#dedede" stroke="#9a9a9a" stroke-width="0.8"/><path d="M4.5 28.5 Q1 26.5 2 23 Q3.5 18.5 9 19 Q12.5 20.5 11.5 25 L10 27.5 L8.5 24 L6 24.5 L5 28Z" fill="#dedede" stroke="#9a9a9a" stroke-width="0.8"/><path d="M16.5 15 Q23 19 27.5 23.5" stroke="#d99a00" stroke-width="4.6" stroke-linecap="round"/><path d="M23 20 L28 24.5" stroke="#e0a000" stroke-width="5.6" stroke-linecap="round"/><path d="M17.5 15.5 Q23 19 27 23" stroke="#ffd21f" stroke-width="1.8" stroke-linecap="round"/></svg>
<!-- Dati progetto icon -->
<svg class="a" style="left:19px;top:745px" width="32" height="32" viewBox="0 0 32 32"><rect width="32" height="32" fill="#fff"/><rect y="26" width="32" height="6" fill="#f4f4f4"/><circle cx="18.2" cy="14" r="11.2" fill="#22628e"/><path d="M18.2 7 L27.5 16.5 L26 16.5 L26 23.5 L10.4 23.5 L10.4 16.5 L8.9 16.5 Z" fill="#fff"/><rect x="9" y="22" width="19" height="4" fill="#fff"/><text x="18.3" y="22.3" font-family="Liberation Sans" font-size="11" font-weight="bold" fill="#22628e" text-anchor="middle" letter-spacing="-0.6">‰</text><path d="M4.7 29.5 V5" stroke="#22628e" stroke-width="1.4"/><path d="M2.7 6.5 L4.7 3 L6.7 6.5Z" fill="#22628e"/><path d="M0.8 26.5 H29" stroke="#22628e" stroke-width="1.4"/><path d="M27.5 24.3 L31 26.5 L27.5 28.7Z" fill="#22628e"/></svg>
<!-- Settaggi nav icon -->
<svg class="a" style="left:19px;top:793px" width="32" height="32" viewBox="0 0 32 32"><defs><linearGradient id="ng" x1="0" y1="0" x2="0.3" y2="1"><stop offset="0" stop-color="#bfe0fb"/><stop offset="1" stop-color="#9cc0f5"/></linearGradient><linearGradient id="nh" x1="0" y1="0" x2="0" y2="1"><stop offset="0" stop-color="#b6d6f3"/><stop offset="1" stop-color="#86a9cf"/></linearGradient><linearGradient id="py" x1="0" y1="0" x2="1" y2="0"><stop offset="0" stop-color="#ffe84a"/><stop offset="1" stop-color="#e9a800"/></linearGradient></defs><rect width="32" height="32" fill="#fff"/><path d="M13.45 5.82 L13.84 2.07 L17.33 1.96 L17.94 5.69 L21.25 6.94 L24.19 4.57 L26.72 6.95 L24.53 10.02 L25.98 13.25 L29.73 13.64 L29.84 17.13 L26.11 17.74 L24.86 21.05 L27.23 23.99 L24.85 26.52 L21.78 24.33 L18.55 25.78 L18.16 29.53 L14.67 29.64 L14.06 25.91 L10.75 24.66 L7.81 27.03 L5.28 24.65 L7.47 21.58 L6.02 18.35 L2.27 17.96 L2.16 14.47 L5.89 13.86 L7.14 10.55 L4.77 7.61 L7.15 5.08 L10.22 7.27Z" fill="url(#ng)"/><circle cx="16" cy="15.8" r="8" fill="url(#nh)" stroke="#6d7f92" stroke-width="0.8" stroke-dasharray="1.2 0.8"/><g transform="translate(12.3 21) rotate(-44)"><path d="M0 0 L4.5 -3 L22 -3 L22 3 L4.5 3Z" fill="url(#py)" stroke="#c08a00" stroke-width="0.6"/><path d="M0 0 L4.5 -3 L4.5 3Z" fill="#f5e6a0"/><path d="M0 0 L1.6 -1 L1.6 1Z" fill="#444"/><rect x="21" y="-3" width="2" height="6" fill="#333"/></g></svg>
<!-- Stampe printer -->
<svg class="a" style="left:19px;top:841px" width="32" height="31" viewBox="0 0 32 31"><defs><linearGradient id="prb" x1="0" y1="0" x2="0" y2="1"><stop offset="0" stop-color="#fbfbfb"/><stop offset="1" stop-color="#c8c9cc"/></linearGradient></defs><rect x="4" y="4" width="23" height="5" fill="#3a3f46"/><rect x="7.3" y="1.3" width="17" height="12" rx="1.2" fill="#fff" stroke="#23272d" stroke-width="1.3"/><path d="M1.6 9 H10.5 L12 13.3 H20 L21.5 9 H30.4 V24 H1.6Z" fill="url(#prb)" stroke="#23272d" stroke-width="1.3" stroke-linejoin="round"/><rect x="2.2" y="19.5" width="27.6" height="4" fill="#5f6a77"/><rect x="2.2" y="19" width="27.6" height="1" fill="#fff"/><rect x="4" y="23" width="24" height="4" fill="#3a3f46"/><rect x="7.5" y="22.3" width="17" height="7.5" rx="1" fill="#fff" stroke="#23272d" stroke-width="1.3"/><rect x="9" y="23.5" width="14" height="4" fill="#9aa7b1"/><path d="M5 14.7 H8" stroke="#999" stroke-width="0.7"/></svg>
<!-- big header pencil -->
<svg class="a" style="left:240px;top:94px" width="46" height="46" viewBox="0 0 46 46"><rect x="2.3" y="2.3" width="39.4" height="43" rx="3.8" fill="#fff" stroke="#0f9ce2" stroke-width="2.4"/><g transform="translate(18.4 38.4) rotate(-45)"><path d="M0 0 L8.8 -5 L32.5 -5 Q35.3 -5 35.3 -2.4 L35.3 2.4 Q35.3 5 32.5 5 L8.8 5 Z" fill="#fff" stroke="#0f9ce2" stroke-width="2" stroke-linejoin="round"/><path d="M8.8 -5 V5 M27.5 -5 V5" stroke="#0f9ce2" stroke-width="2"/></g></svg>
<!-- content toolbar icons -->
<svg class="a" style="left:235px;top:155px" width="13" height="14" viewBox="0 0 13 14"><path d="M0.5 0.5 H8.5 L11.5 3.5 V13.5 H0.5 Z" fill="#fafafa" stroke="#b9b9b9"/><path d="M2 5H10M2 7.5H10M2 10H10" stroke="#ececec"/></svg>
<svg class="a" style="left:299px;top:155px" width="16" height="15" viewBox="0 0 16 15"><path d="M0.2 1.2 L2.5 0.3 L5 1.3 L9 4.8 L12 9.3 L14.3 12 L14 13.2 L12.3 13 L8.4 8.2 L4.4 4.3 L1.2 3 Z" fill="#9d9d9d"/><path d="M15.9 0.3 L15.9 1.5 L13.3 2.3 L10.2 5.6 L6.2 10 L5.2 12.8 L2.8 14.8 L1.8 12.6 L2.4 10.3 L7 5.8 L12 1.4 Z" fill="#9d9d9d"/></svg>
<svg class="a" style="left:367px;top:154px" width="18" height="15" viewBox="0 0 18 15"><path d="M0.5 0.5 H6.5 L9.5 3.5 V11.5 H0.5Z" fill="#fff" stroke="#2d6fae"/><path d="M7.5 3.5 H13 L16.5 7 V14.5 H7.5Z" fill="#fff" stroke="#2d6fae"/><path d="M2 4H6M2 6H6M2 8H6M9 8.5H14M9 10.5H15M9 12.5H15" stroke="#7aa6d0" stroke-width="0.9"/></svg>
<div class="a" style="left:437px;top:152px;width:1px;height:20px;background:#f5f8fc"></div>
<svg class="a" style="left:444px;top:154px" width="18" height="16" viewBox="0 0 18 16"><rect x="0.5" y="0.5" width="13" height="15" fill="#fff" stroke="#3b6fb6"/><rect x="2" y="2" width="10" height="2" fill="#8fb4e0"/><path d="M3 10.5 L8 7 V9 H16.5 V12 H8 V14Z" fill="#5cb040" stroke="#2f7f24" stroke-width="0.7"/></svg>
<svg class="a" style="left:517px;top:154px" width="17" height="15" viewBox="0 0 17 15"><rect x="0.5" y="0.5" width="15" height="14" fill="#fff" stroke="#3b6fb6"/><rect x="1" y="1" width="14" height="2.5" fill="#3b6fb6"/><path d="M3 6H6M3 8.5H6M3 11H6" stroke="#9ab" stroke-width="0.8"/><path d="M7 7.5 H11 V5.5 L16 9 L11 12.5 V10.5 H7Z" fill="#3d7fe0" stroke="#1f4fa8" stroke-width="0.7"/></svg>
<!-- detail word icon -->
<svg class="a" style="left:504px;top:266px" width="17" height="16" viewBox="0 0 17 16"><path d="M3.5 0.5 H11.5 L15.5 4.5 V15.5 H3.5 Z" fill="#fff" stroke="#8a8a8a"/><path d="M4 15.3 H15.5 V4.5" fill="none" stroke="#000" stroke-width="1.2"/><path d="M11.5 0.5 V4.5 H15.5" fill="#fff" stroke="#000" stroke-width="0.8"/><rect x="0.6" y="2.6" width="9.6" height="9.4" fill="#fff" stroke="#0a0af0" stroke-width="1.3" stroke-dasharray="1.2 0.5"/><rect x="1.8" y="3.8" width="7.2" height="7" fill="none" stroke="#000060" stroke-width="0.7"/><path d="M2.4 5.2 L3.8 10.2 L5.4 6.6 L7 10.2 L8.4 5.2" fill="none" stroke="#000050" stroke-width="1.5"/><path d="M11 7.5H14M11 10H14M11 12.5H14" stroke="#bbb" stroke-width="0.8"/></svg>
<!-- textbox scroll arrows -->
<svg class="a" style="left:1259px;top:297px" width="10" height="6" viewBox="0 0 10 6"><path d="M1 5 L5 1 L9 5" fill="none" stroke="#b3b3b3" stroke-width="1.2"/></svg>
<svg class="a" style="left:1259px;top:337px" width="10" height="6" viewBox="0 0 10 6"><path d="M1 1 L5 5 L9 1" fill="none" stroke="#b3b3b3" stroke-width="1.2"/></svg>
<!-- grid toolbar icons -->
<svg class="a" style="left:501px;top:371px" width="12" height="14" viewBox="0 0 12 14"><path d="M0.5 0.5 H8 L11 3.5 V13.5 H0.5 Z" fill="#fafafa" stroke="#b9b9b9"/><path d="M2 5H9.5M2 7.5H9.5M2 10H9.5" stroke="#ececec"/></svg>
<svg class="a" style="left:565px;top:371px" width="16" height="15" viewBox="0 0 16 15"><path d="M0.2 1.2 L2.5 0.3 L5 1.3 L9 4.8 L12 9.3 L14.3 12 L14 13.2 L12.3 13 L8.4 8.2 L4.4 4.3 L1.2 3 Z" fill="#555"/><path d="M15.9 0.3 L15.9 1.5 L13.3 2.3 L10.2 5.6 L6.2 10 L5.2 12.8 L2.8 14.8 L1.8 12.6 L2.4 10.3 L7 5.8 L12 1.4 Z" fill="#555"/></svg>
<!-- grid scroll arrows -->
<svg class="a" style="left:1260px;top:420px" width="10" height="7" viewBox="0 0 10 7"><path d="M1 6 L5 2 L9 6" fill="none" stroke="#444" stroke-width="1.8"/></svg>
<svg class="a" style="left:1260px;top:827px" width="10" height="7" viewBox="0 0 10 7"><path d="M1 1 L5 5 L9 1" fill="none" stroke="#444" stroke-width="1.8"/></svg>

</body></html>
